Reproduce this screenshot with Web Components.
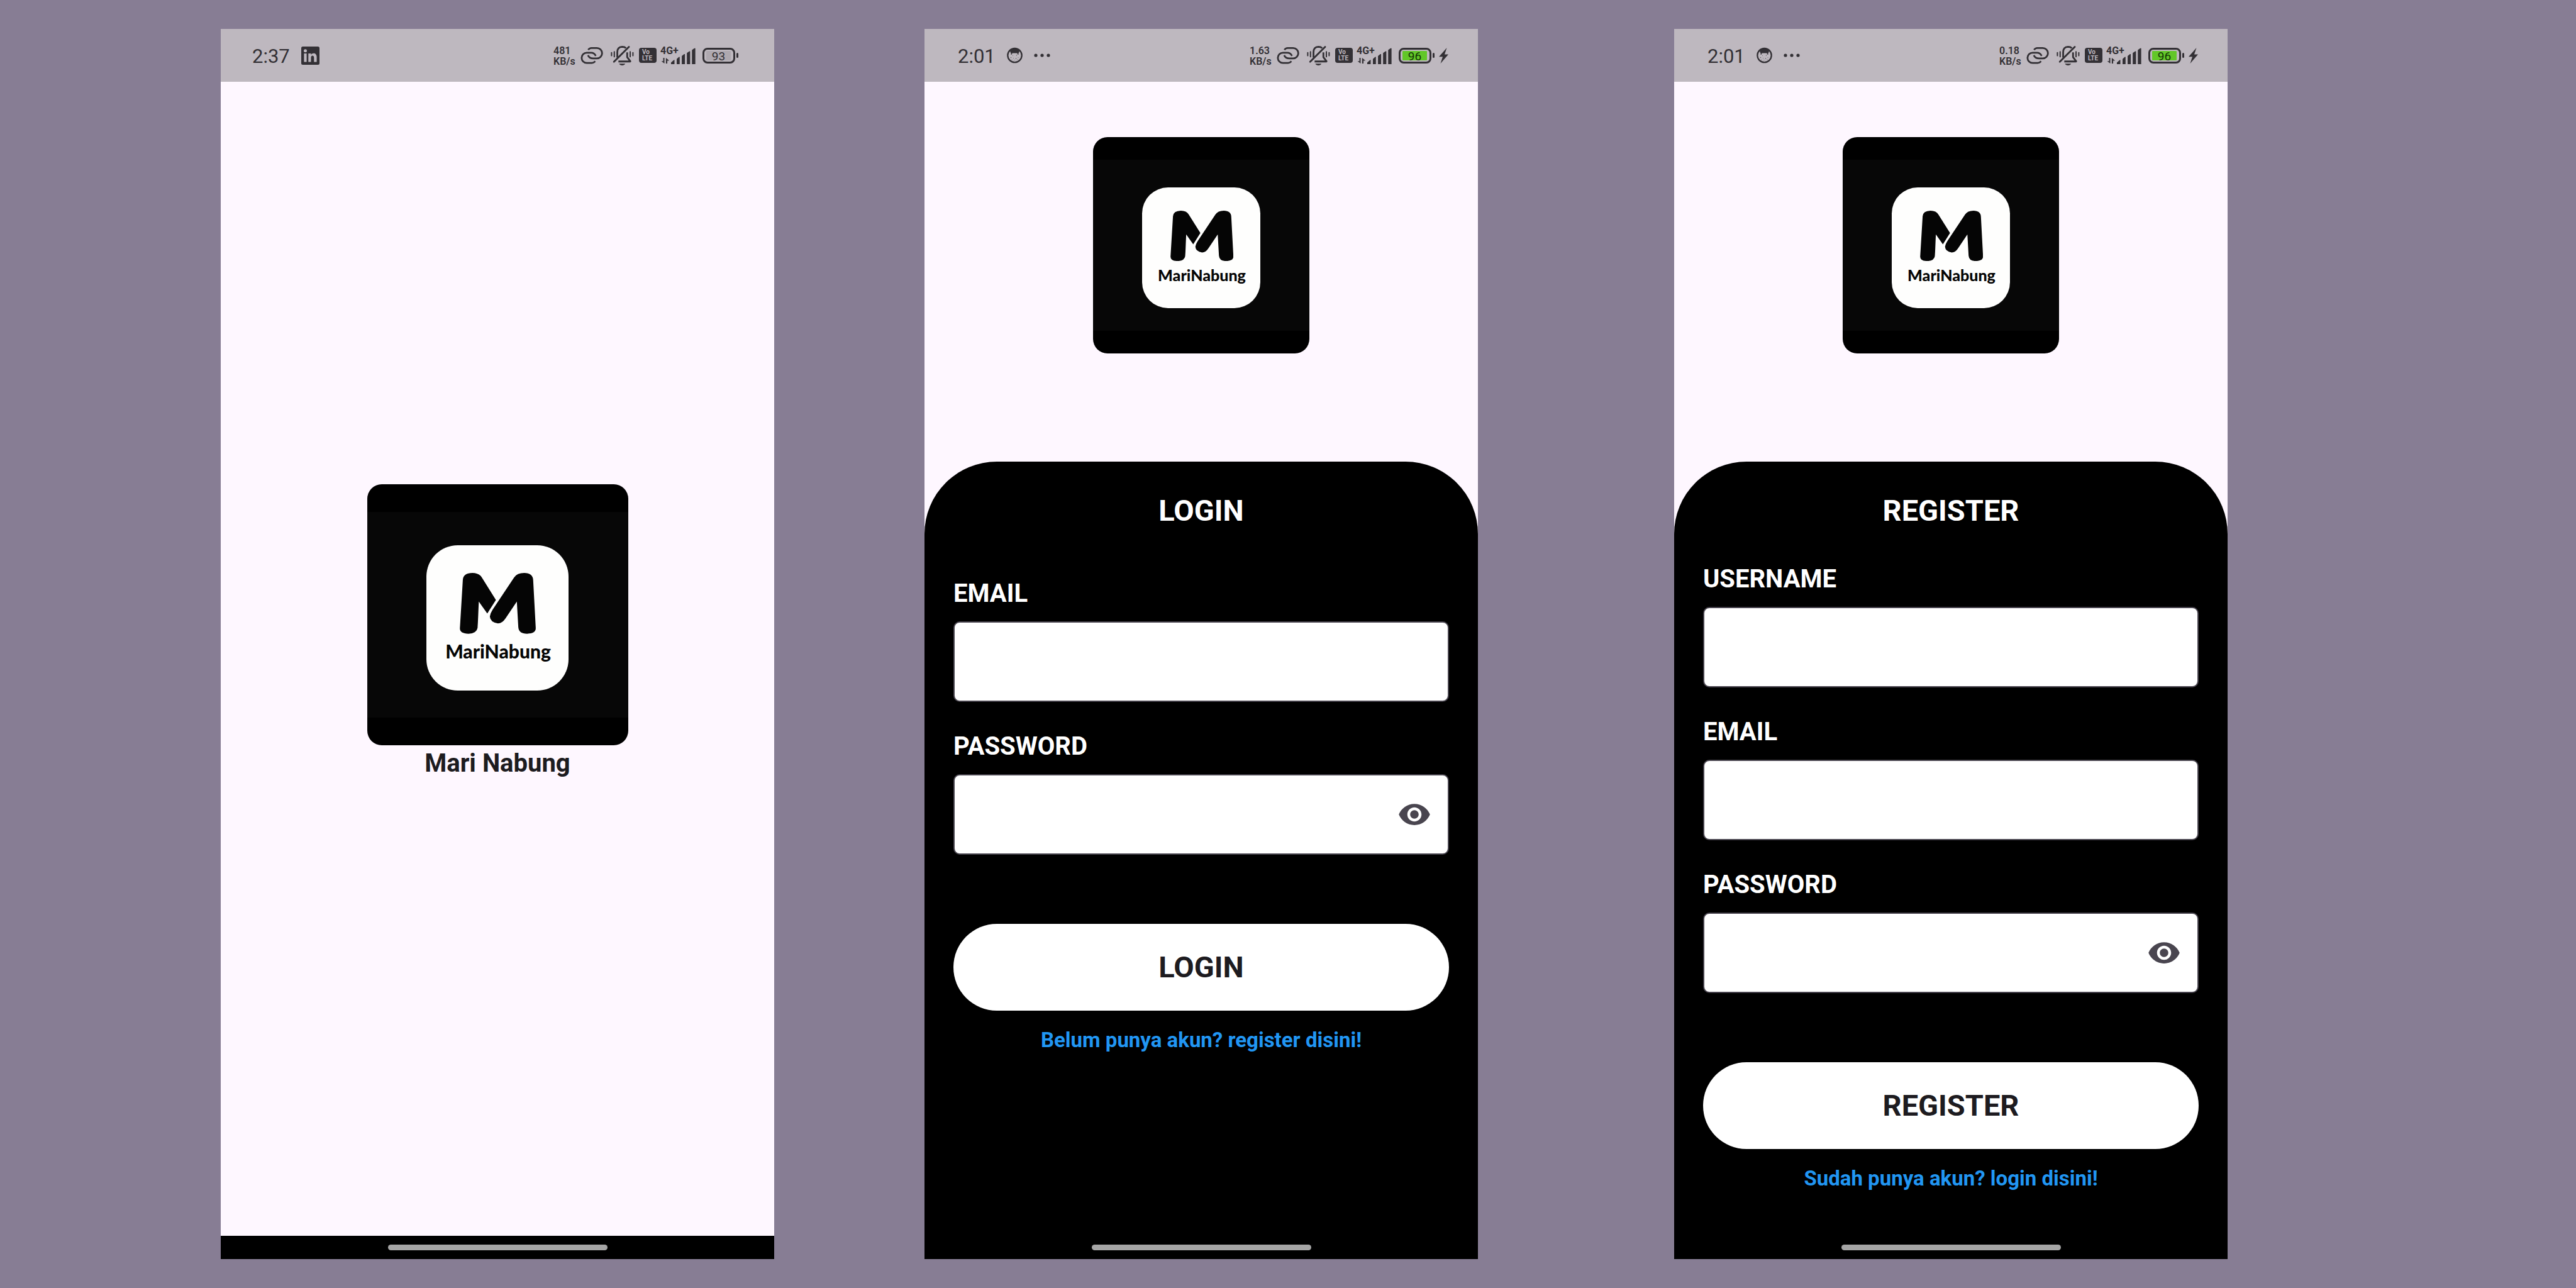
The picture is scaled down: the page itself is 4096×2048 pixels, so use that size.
<!DOCTYPE html>
<html lang="id">
<head>
<meta charset="utf-8">
<title>MariNabung</title>
<style>
  html, body { margin: 0; }
  body {
    min-height: 100vh;
    display: grid;
    grid-template-columns: 351fr 880fr 239fr 880fr 312fr 880fr 554fr;
    padding: 46px 0;
    box-sizing: border-box;
    background: #877d94;
    font-family: Roboto, "Liberation Sans", sans-serif;
  }
  phone-frame:nth-of-type(1) { grid-column: 2; }
  phone-frame:nth-of-type(2) { grid-column: 4; }
  phone-frame:nth-of-type(3) { grid-column: 6; }
</style>
</head>
<body>
<phone-frame>
  <status-bar slot="status" time="2:37" speed="481" battery="93" app="linkedin"></status-bar>
  <splash-screen>Mari Nabung</splash-screen>
</phone-frame>
<phone-frame>
  <status-bar slot="status" time="2:01" speed="1.63" battery="96" charging></status-bar>
  <auth-screen>
    <auth-form heading="LOGIN" fields="email password" link="Belum punya akun? register disini!"></auth-form>
  </auth-screen>
</phone-frame>
<phone-frame>
  <status-bar slot="status" time="2:01" speed="0.18" battery="96" charging></status-bar>
  <auth-screen>
    <auth-form heading="REGISTER" fields="username email password" link="Sudah punya akun? login disini!" compact></auth-form>
  </auth-screen>
</phone-frame>

<script>
class PhoneFrame extends HTMLElement {
  constructor() {
    super();
    this.attachShadow({ mode: 'open' }).innerHTML = `
      <style>
        :host { display: flex; flex-direction: column; background: #fef7ff; min-width: 0; }
        main { flex: 1; display: flex; flex-direction: column; }
        footer { height: 37px; background: #000; display: flex; align-items: center; justify-content: center; }
        .home { width: 349px; height: 9px; border-radius: 5px; background: #a5a5a5; }
      </style>
      <slot name="status"></slot>
      <main><slot></slot></main>
      <footer><div class="home"></div></footer>`;
  }
}

class StatusBar extends HTMLElement {
  connectedCallback() {
    const charging = this.hasAttribute('charging');
    const linkedin = this.getAttribute('app') === 'linkedin';
    this.attachShadow({ mode: 'open' }).innerHTML = `
      <style>
        :host {
          display: flex; justify-content: space-between; align-items: center;
          height: 84px; box-sizing: border-box; padding: 0 47px 0 53px;
          background: #beb8bf; color: #333035;
        }
        :host(:not([charging])) { padding: 0 56px 0 50px; }
        svg { display: block; overflow: visible; }
        .left { display: flex; align-items: center; gap: 18px; }
        .right { display: flex; align-items: center; gap: 6px; }
        .time { padding-top: 3px; font-size: 31px; line-height: 36px; }
        .speed { width: 37px; padding-top: 2px; font-size: 16px; line-height: 17px; font-weight: 600; }
        .line { fill: none; stroke: currentColor; stroke-width: 14; stroke-linejoin: round; }
        .link { margin-right: 6px; }
        .bell { margin-right: 2px; }
        .volte {
          width: 28px; height: 24px; box-sizing: border-box; padding: 2px 0 0 5px; border-radius: 4px;
          background: currentColor; font-size: 10px; line-height: 10px; font-weight: 700;
        }
        .volte span { display: block; color: #beb8bf; }
        .signal { display: grid; width: 61px; }
        .signal > * { grid-area: 1 / 1; }
        .signal span { font-size: 16px; line-height: 12px; font-weight: 700; }
        .battery { display: flex; align-items: center; gap: 2px; width: 58px; }
        .cell {
          width: 52px; height: 25px; box-sizing: border-box; border: 3px solid currentColor;
          border-radius: 8px; padding: 2px 4px 2px 3px; display: flex;
        }
        .charge {
          flex: 1; background: #aea8af; font-size: 19px; line-height: 17px; text-align: center; border-radius: 1px;
        }
        :host([charging]) .charge { background: #62c728; color: #143306; }
        .nub { width: 3px; height: 8px; border-radius: 2px; background: currentColor; }
      </style>
      <div class="left">
        <span class="time">${this.getAttribute('time')}</span>
        ${linkedin ? `
        <svg width="29" height="29" viewBox="0 0 29 29" fill="currentColor">
          <path fill-rule="evenodd" d="M2.500 0h24Q29 0 29 2.500v24Q29 29 26.500 29h-24Q0 29 0 26.500v-24Q0 0 2.500 0ZM4.400 11h4.200v13.600H4.400ZM6.500 4.200a2.500 2.500 0 1 0 0 5 2.500 2.500 0 1 0 0-5ZM11.300 11v13.600h4.200v-6.800c0-4.400 4.800-4.300 4.800 0v6.800h4.300V16.600c0-7-6.800-7.200-9.100-3.600V11Z"/>
        </svg>` : `
        <svg width="25" height="26" viewBox="0 0 25 26">
          <circle cx="12.500" cy="13" r="11.200" fill="none" stroke="currentColor" stroke-width="2.300"/>
          <path fill="currentColor" d="M5 5Q12.500-2 20 5L19.500 8Q18 9 18.500 12L17 11.500 16.500 9.500H8.500L8 11.500 6.500 12Q7 9 5.500 8Z"/>
          <g fill="currentColor" opacity=".7">
            <circle cx="6.500" cy="16.500" r=".7"/><circle cx="15.500" cy="13" r=".7"/><circle cx="14.500" cy="18" r=".8"/>
            <circle cx="10.500" cy="17.500" r=".5"/><circle cx="18" cy="16.500" r=".5"/><circle cx="8" cy="20" r=".5"/>
            <circle cx="12" cy="20.500" r=".5"/><circle cx="9.500" cy="13.500" r=".5"/><circle cx="17" cy="19.500" r=".5"/>
          </g>
        </svg>
        <svg width="26" height="6" viewBox="0 0 26 6" fill="currentColor">
          <circle cx="3" cy="3" r="2.600"/><circle cx="13" cy="3" r="2.600"/><circle cx="23" cy="3" r="2.600"/>
        </svg>`}
      </div>
      <div class="right">
        <div class="speed">${this.getAttribute('speed')}<br>KB/s</div>
        <svg class="link" width="36" height="28" viewBox="12 42 182 142">
          <path class="line" d="M74 69Q84 54 100 54H144A42 42 0 0 1 144 138H114Q84 138 72 112"/>
          <path class="line" d="M135 117Q123 92 98 92H62A41 41 0 0 0 62 174H104Q119 174 130 160"/>
        </svg>
        <svg class="bell" width="37" height="32" viewBox="16 36 186 160">
          <path class="line" stroke-linecap="round" d="M42 168L162 48"/>
          <path class="line" d="M69 134V92Q69 49 108 48Q128 48 138 58M148 92V130L173 163Q174 165 168 165H78"/>
          <path class="line" style="stroke-width:10" stroke-linecap="round" d="M23 94V118M45 87V127M172 87V127M194 94V118"/>
          <path fill="currentColor" d="M84 182H132Q126 196 108 196T84 182Z"/>
        </svg>
        <div class="volte"><span>Vo</span><span>LTE</span></div>
        <div class="signal">
          <svg width="56" height="27" viewBox="206 46 284 136" fill="currentColor">
            <path d="M229 132H239V178L214 158H229ZM251 178V132L278 154H262V178Z"/>
            <path d="M292 170L316 148H320V182H292ZM338 140L356 124H362V182H338ZM379 116L398 101H404V182H379ZM420 93L440 78H446V182H420ZM461 68L480 54H488V182H461Z"/>
          </svg>
          <span>4G+</span>
        </div>
        <div class="battery">
          <div class="cell"><div class="charge">${this.getAttribute('battery')}</div></div>
          <div class="nub"></div>
        </div>
        ${charging ? `
        <svg width="15" height="25" viewBox="0 0 15 25" fill="currentColor">
          <path d="M12.500 0L0 14.200H6L2.500 25 15 10.600H9Z"/>
        </svg>` : ''}
      </div>`;
  }
}

class AppLogo extends HTMLElement {
  constructor() {
    super();
    this.attachShadow({ mode: 'open' }).innerHTML = `
      <style>
        :host {
          --size: 344px; --name: 25px;
          display: block; box-sizing: border-box; width: var(--size); height: var(--size);
          padding-top: calc(var(--size) * .233); border-radius: 23px;
          background: linear-gradient(#000 10.5%, #070707 10.5% 89.5%, #000 89.5%);
        }
        :host([large]) { --size: 415px; --name: 30px; }
        .tile {
          display: flex; flex-direction: column; align-items: center; box-sizing: border-box;
          width: calc(var(--size) * .546); height: calc(var(--size) * .557);
          margin: 0 auto; padding-top: calc(var(--size) * .106); padding-left: 2px;
          border-radius: calc(var(--size) * .12); background: #fefefd; color: #050505;
        }
        svg { display: block; width: calc(var(--size) * .292); }
        span { font: 900 var(--name)/1.8 Lato, sans-serif; }
      </style>
      <div class="tile">
        <svg viewBox="586 550 415 332" fill="#050505">
          <path d="M603 586Q606 551 655 550Q692 550 707 576L783 697 736 771 690 706C687 760 686 820 683 850Q678 880 634 881Q585 880 587 850Z"/>
          <path d="M750 787Q752 770 765 750L882 575Q898 550 937 550Q985 551 986 590L1000 850Q1001 880 953 881Q908 881 905 845L897 706 836 797Q818 825 794 825Q752 818 750 787Z"/>
        </svg>
        <span>MariNabung</span>
      </div>`;
  }
}

class SplashScreen extends HTMLElement {
  constructor() {
    super();
    this.attachShadow({ mode: 'open' }).innerHTML = `
      <style>
        :host { flex: 1; display: flex; flex-direction: column; align-items: center; justify-content: center; padding-bottom: 83px; }
        p { margin: 0; font-size: 40px; line-height: 57px; font-weight: 700; color: #1d1b20; }
      </style>
      <app-logo large></app-logo>
      <p><slot></slot></p>`;
  }
}

class AuthScreen extends HTMLElement {
  constructor() {
    super();
    this.attachShadow({ mode: 'open' }).innerHTML = `
      <style>
        :host { flex: 1; display: flex; flex-direction: column; }
        header { display: flex; justify-content: center; padding: 88px 0 172px; }
        section { flex: 1; box-sizing: border-box; padding: 51px 46px 0; border-radius: 115px 115px 0 0; background: #000; }
      </style>
      <header><app-logo></app-logo></header>
      <section><slot></slot></section>`;
  }
}

class AuthForm extends HTMLElement {
  connectedCallback() {
    const heading = this.getAttribute('heading');
    const fields = this.getAttribute('fields').split(' ').map(name => `
      <div class="field">
        <label for="${name}">${name.toUpperCase()}</label>
        <div class="box">
          <input id="${name}" name="${name}" type="${name === 'username' ? 'text' : name}">
          ${name === 'password' ? `
          <button class="eye" type="button" aria-label="Tampilkan password">
            <svg width="54" height="54" viewBox="0 0 24 24" fill="currentColor">
              <path d="M12 4.500C7 4.500 2.730 7.610 1 12c1.730 4.390 6 7.500 11 7.500s9.270-3.110 11-7.500c-1.730-4.390-6-7.500-11-7.500zM12 17c-2.760 0-5-2.240-5-5s2.240-5 5-5 5 2.240 5 5-2.240 5-5 5zm0-8c-1.660 0-3 1.340-3 3s1.340 3 3 3 3-1.340 3-3-1.340-3-3-3z"/>
            </svg>
          </button>` : ''}
        </div>
      </div>`).join('');
    this.attachShadow({ mode: 'open' }).innerHTML = `
      <style>
        :host { display: block; color: #fff; }
        h1 { margin: 0 0 81px; font-size: 47px; line-height: 54px; font-weight: 700; text-align: center; }
        :host([compact]) h1 { margin-bottom: 58px; }
        form { display: flex; flex-direction: column; }
        .fields { display: flex; flex-direction: column; gap: 47px; }
        .field { display: flex; flex-direction: column; gap: 20px; }
        label { font-size: 40px; line-height: 48px; font-weight: 700; }
        .box {
          display: flex; align-items: center; height: 128px; box-sizing: border-box;
          border: 2px solid #49454f; border-radius: 10px; background: #fff; overflow: hidden;
        }
        input { flex: 1; min-width: 0; height: 100%; box-sizing: border-box; border: 0; padding: 0 28px; background: none; font: 37px Roboto, sans-serif; color: #1d1b20; outline: 0; }
        button { border: 0; padding: 0; font-family: inherit; }
        .eye { display: flex; align-items: center; justify-content: center; width: 106px; height: 106px; background: none; color: #49454f; }
        .submit { margin-top: 110px; height: 138px; border-radius: 69px; background: #fff; color: #1d1b20; font-size: 47px; line-height: 54px; font-weight: 700; }
        a { align-self: center; margin-top: 28px; font-size: 33px; line-height: 38px; font-weight: 700; color: #2196f3; text-decoration: none; }
      </style>
      <h1>${heading}</h1>
      <form>
        <div class="fields">${fields}</div>
        <button class="submit" type="button">${heading}</button>
        <a href="#">${this.getAttribute('link')}</a>
      </form>`;
  }
}

customElements.define('phone-frame', PhoneFrame);
customElements.define('status-bar', StatusBar);
customElements.define('app-logo', AppLogo);
customElements.define('splash-screen', SplashScreen);
customElements.define('auth-screen', AuthScreen);
customElements.define('auth-form', AuthForm);
</script>
</body>
</html>
